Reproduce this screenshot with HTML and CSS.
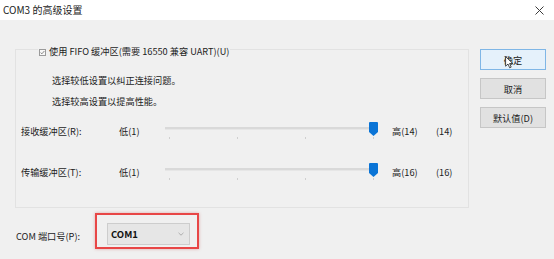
FILE: index.html
```html
<!DOCTYPE html>
<html lang="zh-CN">
    <head>
        <meta charset="UTF-8" />
        <title>COM3 的高级设置</title>
        <link rel="stylesheet" href="styles.css">
    </head>
    <body>
        <div class="title-bar">
            <span class="title">COM3 的高级设置</span>
            <svg class="close-icon" width="9" height="9" viewBox="0 0 9 9">
                <path d="M0.5 0.5L8.5 8.5M8.5 0.5L0.5 8.5" stroke="#3a3a3a" stroke-width="1" fill="none"/>
            </svg>
        </div>

        <div class="content">
            <!-- Left column - buffer settings and port -->
            <div class="left-col">
                <fieldset class="group">
                    <legend class="group-title">
                        <svg class="checkbox" width="7" height="7" viewBox="0 0 7 7">
                            <rect x="0.5" y="0.5" width="6" height="6" fill="#f7f7f7" stroke="#9a9a9a" stroke-width="1"/>
                            <path d="M1.6 3.6L2.9 4.8L5.4 2" stroke="#7a7a7a" stroke-width="0.9" fill="none"/>
                        </svg>
                        使用 FIFO 缓冲区(需要 16550 兼容 UART)(U)
                    </legend>

                    <p class="note note-first">选择较低设置以纠正连接问题。</p>
                    <p class="note">选择较高设置以提高性能。</p>

                    <div class="slider-row">
                        <span class="row-label">接收缓冲区(R):</span>
                        <span class="min-label">低(1)</span>
                        <div class="slider">
                            <div class="track"></div>
                            <div class="ticks"><span></span><span></span><span></span><span></span></div>
                            <svg class="thumb" width="9" height="14" viewBox="0 0 9 14">
                                <path d="M1 0H8Q9 0 9 1V10L4.5 14L0 10V1Q0 0 1 0Z" fill="#0a74d6"/>
                            </svg>
                        </div>
                        <span class="max-label">高(14)</span>
                        <span class="value">(14)</span>
                    </div>

                    <div class="slider-row slider-row-second">
                        <span class="row-label">传输缓冲区(T):</span>
                        <span class="min-label">低(1)</span>
                        <div class="slider">
                            <div class="track"></div>
                            <div class="ticks"><span></span><span></span><span></span><span></span></div>
                            <svg class="thumb" width="9" height="14" viewBox="0 0 9 14">
                                <path d="M1 0H8Q9 0 9 1V10L4.5 14L0 10V1Q0 0 1 0Z" fill="#0a74d6"/>
                            </svg>
                        </div>
                        <span class="max-label">高(16)</span>
                        <span class="value">(16)</span>
                    </div>
                </fieldset>

                <div class="port-row">
                    <span class="port-label">COM 端口号(P):</span>
                    <div class="highlight">
                        <div class="combo">
                            <span class="combo-text">COM1</span>
                            <svg class="combo-arrow" width="6" height="4" viewBox="0 0 6 4">
                                <path d="M0.5 0.8L3 3.2L5.5 0.8" stroke="#a8a8a8" stroke-width="0.9" fill="none"/>
                            </svg>
                        </div>
                    </div>
                </div>
            </div>

            <!-- Right column - dialog buttons -->
            <div class="buttons">
                <button class="btn btn-default">确定
                    <svg class="cursor" width="9" height="13" viewBox="0 0 9 13">
                        <path d="M0.6 0.6V10.2L3 8L4.7 11.8L6.2 11.1L4.6 7.5H7.8Z" fill="#ffffff" stroke="#222" stroke-width="0.8" stroke-linejoin="round"/>
                    </svg>
                </button>
                <button class="btn">取消</button>
                <button class="btn">默认值(D)</button>
            </div>
        </div>
    </body>
</html>
```

FILE: styles.css
```css
body {
    margin: 0;
    width: 554px;
    height: 259px;
    overflow: hidden;
    background-color: #f0f0f0;
    font-family: "Noto Sans CJK SC", "Noto Sans", sans-serif;
    font-size: 9.2px;
    line-height: 12px;
    color: #1c1c1c;
}
.title-bar {
    display: flex;
    align-items: center;
    justify-content: space-between;
    height: 20px;
    padding: 0 10px 0 3px;
    background: white;
}
.title {
    font-size: 10px;
}
.close-icon {
    display: block;
}
.content {
    display: flex;
}
.left-col {
    width: 454px;
    padding: 21px 0 0 15px;
}
.group {
    box-sizing: border-box;
    width: 454px;
    min-width: 0;
    margin: 0;
    padding: 0 0 27px 5px;
    border: 1px solid #e2e2e2;
}
.group-title {
    margin-left: 17px;
    padding: 4px 1px 0 1px;
    line-height: 12px;
}
.checkbox {
    vertical-align: -0.5px;
    margin-right: 1px;
}
.note {
    margin: 9px 0 0 31px;
}
.note-first {
    margin-top: 17px;
}
.slider-row {
    display: flex;
    align-items: center;
    margin-top: 15px;
}
.slider-row-second {
    margin-top: 24px;
}
.row-label {
    width: 98px;
}
.min-label {
    width: 46px;
}
.slider {
    position: relative;
    width: 213px;
    padding-top: 5px;
}
.track {
    height: 2px;
    background: #d9d9d9;
    border-bottom: 1px solid #e6e6e6;
}
.ticks {
    display: flex;
    justify-content: space-between;
    margin-top: 7px;
    padding: 0 4px;
}
.ticks span {
    width: 1px;
    height: 2px;
    background: #cfcfcf;
}
.thumb {
    position: absolute;
    top: 0;
    right: 0;
}
.max-label {
    width: 44px;
    margin-left: 14px;
}
.port-row {
    display: flex;
    align-items: flex-start;
    margin-top: 5px;
}
.port-label {
    width: 79px;
    margin: 17px 0 0 1px;
}
.highlight {
    padding: 8px 7px 2px 10px;
    border: 2px solid #e84646;
    box-shadow: 0 0 3px rgba(190, 40, 40, 0.35);
}
.combo {
    box-sizing: border-box;
    display: flex;
    align-items: center;
    justify-content: space-between;
    width: 83px;
    height: 22px;
    padding: 0 5px 0 3px;
    background: #e6e6e6;
    border: 1px solid #cdcdcd;
}
.combo-text {
    font-size: 9.5px;
    font-weight: bold;
    color: #111;
}
.buttons {
    display: flex;
    flex-direction: column;
    gap: 8px;
    margin-left: 11px;
    padding-top: 29px;
}
.btn {
    position: relative;
    box-sizing: border-box;
    width: 66px;
    height: 21px;
    padding: 0;
    background: #e1e1e1;
    border: 1px solid #c6c6c6;
    font-family: inherit;
    font-size: 9.2px;
    color: #1c1c1c;
}
.btn-default {
    background: #e5f1fb;
    border-color: #7fb6e6;
}
.cursor {
    position: absolute;
    left: 24px;
    top: 6px;
}
```
